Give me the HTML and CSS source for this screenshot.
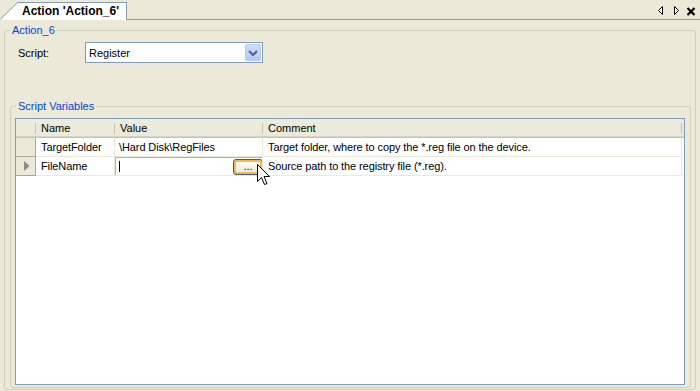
FILE: index.html
```html
<!DOCTYPE html>
<html lang="en">
<head>
    <meta charset="UTF-8">
    <meta name="viewport" content="width=device-width, initial-scale=1.0">
    <title>Action 'Action_6'</title>
    <link rel="stylesheet" href="styles.css">
</head>
<body>
    <header class="tabstrip">
        <div class="tab-lead"></div>
        <svg class="tab-slant" width="20" height="20" viewBox="0 0 20 20">
            <polygon points="0,20 18,2 20,2 20,20" fill="#fff"/>
            <polyline points="0,19.5 17.5,2.5 20,2.5" fill="none" stroke="#7f9db9"/>
        </svg>
        <div class="tab">Action 'Action_6'</div>
        <div class="tab-rest">
            <svg class="tab-nav" width="42" height="19" viewBox="0 0 42 19">
                <polygon points="2.5,10.5 6.5,6.5 6.5,14.5" fill="#fff" stroke="#000"/>
                <polygon points="18.5,6.5 22.5,10.5 18.5,14.5" fill="#fff" stroke="#000"/>
                <path d="M31.5,8 L38.5,15 M38.5,8 L31.5,15" stroke="#000" stroke-width="2.2"/>
            </svg>
        </div>
    </header>

    <main class="panel">
        <fieldset class="group outer">
            <legend>Action_6</legend>
            <div class="field-row">
                <label>Script:</label>
                <div class="combo">
                    <span class="combo-text">Register</span>
                    <span class="combo-btn">
                        <svg width="10" height="6" viewBox="0 0 10 6">
                            <polyline points="1,1 5,5 9,1" fill="none" stroke="#4d6185" stroke-width="2"/>
                        </svg>
                    </span>
                </div>
            </div>

            <fieldset class="group vars">
                <legend>Script Variables</legend>
                <div class="grid">
                    <div class="grid-row grid-head">
                        <div class="hc"></div>
                        <div class="hc">Name</div>
                        <div class="hc">Value</div>
                        <div class="hc">Comment</div>
                    </div>
                    <div class="grid-row">
                        <div class="rh"></div>
                        <div class="cell">TargetFolder</div>
                        <div class="cell">\Hard Disk\RegFiles</div>
                        <div class="cell">Target folder, where to copy the *.reg file on the device.</div>
                    </div>
                    <div class="grid-row current">
                        <div class="rh">
                            <svg width="6" height="10" viewBox="0 0 6 10">
                                <polygon points="0,0 5.5,5 0,10" fill="#8a8a8a"/>
                            </svg>
                        </div>
                        <div class="cell">FileName</div>
                        <div class="cell editing">
                            <span class="caret"></span>
                            <button class="browse">...</button>
                        </div>
                        <div class="cell">Source path to the registry file (*.reg).</div>
                        <!-- mouse pointer hovering the browse button -->
                        <svg class="pointer" width="14" height="22" viewBox="0 0 14 22">
                            <path d="M0.5,0.5 L0.5,17.5 L4.5,13.5 L7.5,20.5 L10,19.5 L7,12.5 L12.5,12.5 Z" fill="#fff" stroke="#000"/>
                        </svg>
                    </div>
                </div>
            </fieldset>
        </fieldset>
    </main>
</body>
</html>
```

FILE: styles.css
```css
/* Global Styles */
body {
    font-family: "Liberation Sans", Arial, sans-serif;
    font-size: 11px;
    color: #000;
    margin: 0;
    padding: 0;
    background-color: #ece9d8;
    width: 700px;
    height: 391px;
    overflow: hidden;
}

/* Tab strip */
.tabstrip {
    display: flex;
    height: 20px;
}

.tab-lead {
    width: 0;
    border-bottom: 1px solid #7f9db9;
}

.tab-slant {
    display: block;
    flex: none;
}

.tab {
    margin-top: 2px;
    padding: 0 7px 0 2px;
    background-color: #fff;
    border-top: 1px solid #7f9db9;
    border-right: 1px solid #7f9db9;
    font-weight: bold;
    font-size: 12px;
    line-height: 17px;
}

.tab-rest {
    flex: 1;
    display: flex;
    justify-content: flex-end;
    border-bottom: 1px solid #7f9db9;
    padding-right: 2px;
}

.tab-nav {
    display: block;
}

/* Panel and group boxes */
.panel {
    padding: 4px 4px 0 4px;
}

.group {
    margin: 0;
    min-width: 0;
    border: 1px solid #d0d0bf;
    border-radius: 3px;
}

.group legend {
    padding: 0 2px;
    color: #0046d5;
    line-height: 13px;
}

.outer {
    padding: 5px 4px 1px 5px;
}

.vars {
    margin-top: 37px;
    padding: 5px 5px 2px 4px;
}

.vars legend {
    margin-left: 1px;
}

.field-row {
    display: flex;
    align-items: center;
    height: 21px;
}

.field-row label {
    width: 67px;
    margin-left: 8px;
}

.combo {
    width: 178px;
    height: 21px;
    box-sizing: border-box;
    border: 1px solid #7f9db9;
    background-color: #fff;
    display: flex;
    align-items: center;
    justify-content: space-between;
}

.combo-text {
    padding-left: 3px;
}

.combo-btn {
    width: 16px;
    height: 17px;
    margin-right: 1px;
    box-sizing: border-box;
    border: 1px solid #bacbf5;
    border-radius: 2px;
    background: linear-gradient(#cddcfd, #b4c9f7);
    display: flex;
    align-items: center;
    justify-content: center;
}

.combo-btn svg {
    display: block;
}

/* Data grid */
.grid {
    height: 267px;
    box-sizing: border-box;
    border: 1px solid #7f9db9;
    background-color: #fff;
}

.grid-row {
    display: grid;
    grid-template-columns: 20px 79px 148px 419px;
    height: 19px;
    position: relative;
    letter-spacing: -0.1px;
}

.grid-head {
    background-color: #ebeadb;
    box-sizing: border-box;
    border-bottom: 1px solid #c5c2b2;
    box-shadow: inset 0 -1px 0 #d8d4c4;
    grid-template-columns: 20px 79px 148px 419px 2px;
    letter-spacing: 0;
}

.hc {
    position: relative;
    padding-left: 5px;
    line-height: 18px;
}

.hc::after {
    content: "";
    position: absolute;
    right: 0;
    top: 4px;
    bottom: 3px;
    width: 1px;
    background-color: #c7c5b2;
}

.rh {
    background-color: #ece9d8;
    box-sizing: border-box;
    border-right: 1px solid #aca899;
    border-bottom: 1px solid #aca899;
    display: flex;
    align-items: center;
    padding-left: 8px;
}

.rh svg {
    display: block;
}

.cell {
    box-sizing: border-box;
    border-right: 1px solid #ece9d8;
    border-bottom: 1px solid #ece9d8;
    padding-left: 5px;
    line-height: 18px;
    white-space: nowrap;
    overflow: hidden;
}

.grid-row .cell:nth-child(3) {
    padding-left: 4px;
}

.cell.editing {
    display: flex;
    align-items: center;
    justify-content: space-between;
    padding-left: 3px;
    box-shadow: inset 1px 1px 0 #b5b2a4;
}

.caret {
    width: 1px;
    height: 11px;
    background-color: #000;
}

.browse {
    width: 30px;
    height: 16px;
    margin-top: 1px;
    margin-right: -1px;
    padding: 0;
    border: 1px solid #3d5a8c;
    border-radius: 3px;
    background: linear-gradient(#fffffe, #ece9d8);
    box-shadow: inset 0 0 0 2px #f5b94a;
    font-family: "Liberation Sans", Arial, sans-serif;
    font-size: 11px;
    line-height: 11px;
    color: #000;
}

.pointer {
    position: absolute;
    left: 241px;
    top: 7px;
}
```
